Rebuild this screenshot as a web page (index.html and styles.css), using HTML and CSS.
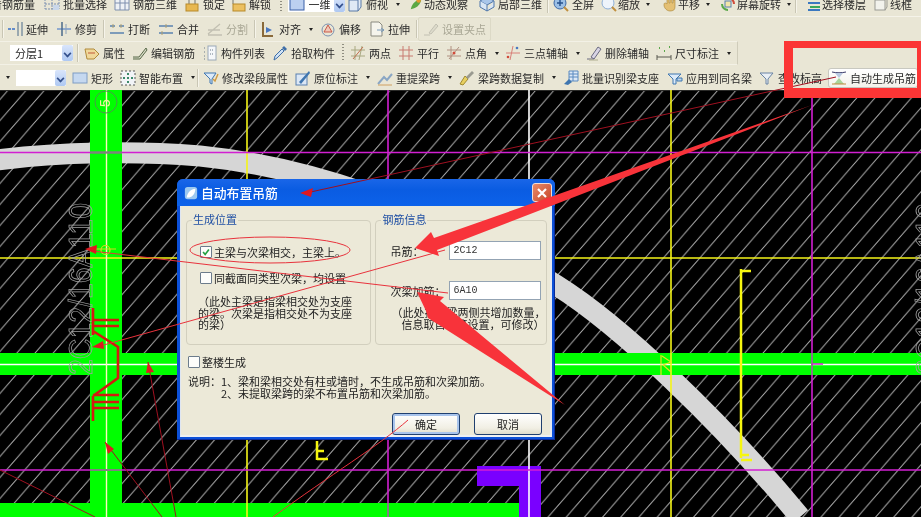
FILE: index.html
```html
<!DOCTYPE html>
<html lang="zh-CN">
<head>
<meta charset="utf-8">
<title>自动布置吊筋</title>
<link rel="stylesheet" href="styles.css">
</head>
<body>
<div class="page">
  <header class="toolbars">
    <div class="row row1">
      <span class="tool first"><span>看钢筋量</span></span>
      <span class="tool"><svg class="ic" viewBox="0 0 16 16"><path d="M1 3h14M1 8h14M1 13h14M1 3v10M8 3v10M15 3v10" stroke="#7a8fb0" stroke-dasharray="2 1" fill="none"/><rect x="9" y="9" width="6" height="5" fill="#c9d7ea"/></svg><span>批量选择</span></span>
      <span class="tool"><svg class="ic" viewBox="0 0 16 16"><path d="M1 2h14v12H1zM6 2v12M11 2v12M1 7h14" stroke="#7f8fae" fill="#eef1f5"/></svg><span>钢筋三维</span></span>
      <span class="tool"><svg class="ic" viewBox="0 0 16 16"><path d="M5 8V4a3 3 0 0 1 6 0v4" stroke="#9a9a90" stroke-width="1.5" fill="none"/><rect x="2" y="8" width="12" height="7" fill="#e8b850" stroke="#b88a2a"/></svg><span>锁定</span></span>
      <span class="tool lock2"><svg class="ic" viewBox="0 0 16 16"><path d="M3 8V4a3 3 0 0 1 6 0" stroke="#9a9a90" stroke-width="1.5" fill="none"/><rect x="3" y="8" width="12" height="7" fill="#ecc060" stroke="#b88a2a"/></svg><span>解锁</span></span>
      <i class="grip"></i>
      <span class="select sel-view"><svg class="ic" viewBox="0 0 16 16"><rect x="1" y="1" width="14" height="13" fill="#bcd0f0" stroke="#3a60a8"/></svg><span>一维</span><b class="drop"></b></span>
      <span class="tool tool-view"><svg class="ic" viewBox="0 0 16 16"><path d="M2 4l4-3h8v10l-3 4H2z" fill="#dfe9f5" stroke="#5a7aa8"/><path d="M2 4h9v11M11 4l3-3" stroke="#5a7aa8" fill="none"/></svg><span>俯视</span><i class="caret"></i></span>
      <span class="tool tight orbit"><svg class="ic small" viewBox="0 0 16 16"><path d="M2 14C3 8 8 3 14 2c0 5-4 10-9 11" fill="#5ca845"/><circle cx="11" cy="4" r="2.5" fill="#e59a30"/></svg><span>动态观察</span></span>
      <span class="tool"><svg class="ic" viewBox="0 0 16 16"><path d="M8 1l7 4-7 4-7-4z" fill="#a9c6ea" stroke="#4f76aa"/><path d="M1 5v6l7 4V9M15 5v6l-7 4" fill="#d9e6f5" stroke="#4f76aa"/></svg><span>局部三维</span></span>
      <i class="sep"></i>
      <span class="tool"><svg class="ic" viewBox="0 0 16 16"><circle cx="7" cy="7" r="6" fill="#9cc0e6" stroke="#3f6aa6"/><path d="M4 7h6M7 4v6" stroke="#26508c" stroke-width="1.4"/><path d="M11 11l4 4" stroke="#c09040" stroke-width="2"/></svg><span>全屏</span></span>
      <span class="tool tight"><svg class="ic" viewBox="0 0 16 16"><circle cx="7" cy="7" r="6" fill="#eef4fb" stroke="#8fb0d6"/><path d="M11 11l4 4" stroke="#c09040" stroke-width="2"/></svg><span>缩放</span><i class="caret"></i></span>
      <span class="tool tight pan"><svg class="ic" viewBox="0 0 16 16"><path d="M3 9c0-3 2-2 3-1V3h2v4h1V2h2v5h1V4h2v7c0 3-2 4-5 4s-6-3-6-6z" fill="#e4c074" stroke="#a88436" stroke-width=".6"/></svg><span>平移</span><i class="caret"></i></span>
      <span class="tool tight spin"><svg class="ic" viewBox="0 0 16 16"><path d="M8 2a6 6 0 0 1 6 6" stroke="#d04a3a" stroke-width="2" fill="none"/><path d="M8 14a6 6 0 0 1-6-6" stroke="#5aa84a" stroke-width="2" fill="none"/><rect x="5" y="5" width="6" height="6" fill="#f1e6a8" stroke="#5a80b0"/></svg><span>屏幕旋转</span><i class="caret"></i></span>
      <i class="sep"></i>
      <span class="tool tight floor"><svg class="ic" viewBox="0 0 16 16"><path d="M1 3h14" stroke="#3aa85a" stroke-width="2"/><path d="M3 7h12" stroke="#3a78c0" stroke-width="2"/><path d="M5 11h10" stroke="#3aa85a" stroke-width="2"/><path d="M3 14h12" stroke="#3a78c0" stroke-width="2"/></svg><span>选择楼层</span></span>
      <span class="tool tight"><svg class="ic" viewBox="0 0 16 16"><rect x="2" y="4" width="10" height="10" fill="#f2f2ec" stroke="#9a9a94"/><path d="M2 4l3-3h9v10l-2 3" fill="none" stroke="#9a9a94"/></svg><span>线框</span></span>
    </div>
    <div class="row row2">
      <i class="sep edge"></i>
      <span class="tool"><svg class="ic" viewBox="0 0 16 16"><path d="M1 8h7" stroke="#3a70c8" stroke-width="1.5" stroke-dasharray="3 1"/><path d="M11 1v14M15 1v14" stroke="#4a6a8a"/></svg><span>延伸</span></span>
      <span class="tool"><svg class="ic" viewBox="0 0 16 16"><path d="M1 8h14" stroke="#3a70c8"/><path d="M6 1v14" stroke="#4a6a8a" stroke-width="1.5"/><path d="M10 3v10" stroke="#8aa0b8"/></svg><span>修剪</span></span>
      <i class="sep"></i>
      <span class="tool"><svg class="ic" viewBox="0 0 16 16"><path d="M1 5h5M10 5h5M1 12h14" stroke="#5a82b0" stroke-width="1.4"/><path d="M4 3v4M12 3v4" stroke="#b0a070"/></svg><span>打断</span></span>
      <span class="tool"><svg class="ic" viewBox="0 0 16 16"><path d="M1 5h14M1 12h14" stroke="#5a82b0" stroke-width="1.4"/><path d="M8 3v4M4 10v4" stroke="#b0a070"/></svg><span>合并</span></span>
      <span class="tool off"><svg class="ic" viewBox="0 0 16 16"><path d="M1 13L13 3M1 9h12M1 14h14" stroke="#c2c0b2" stroke-width="1.3" fill="none"/></svg><span>分割</span></span>
      <i class="sep"></i>
      <span class="tool"><svg class="ic" viewBox="0 0 16 16"><path d="M3 1v14h10" stroke="#8a6a3a" stroke-width="2" fill="none"/><path d="M6 6l6 3-6 3z" fill="#4a78c0"/></svg><span>对齐</span><i class="caret"></i></span>
      <span class="tool"><svg class="ic" viewBox="0 0 16 16"><circle cx="8" cy="9" r="6" fill="none" stroke="#7a90b0"/><path d="M8 4l4 7H4z" fill="#f0c8b8" stroke="#c85a4a"/></svg><span>偏移</span></span>
      <span class="tool"><svg class="ic" viewBox="0 0 16 16"><path d="M2 1h8l3 3v11H2z" fill="#f5f4ec" stroke="#8a8a80"/><path d="M8 9h7M12 7l3 2-3 2" stroke="#7a9ab8" fill="none"/></svg><span>拉伸</span></span>
      <i class="sep"></i>
      <span class="tool off boxed"><svg class="ic" viewBox="0 0 16 16"><path d="M1 14h6M6 12l7-9 2 2-7 8z" stroke="#c2c0b2" fill="#dddbcb"/></svg><span>设置夹点</span></span>
    </div>
    <div class="row row3">
      <span class="select sel-floor"><span>分层1</span><b class="drop"></b></span>
      <i class="sep wide"></i>
      <span class="tool"><svg class="ic" viewBox="0 0 16 16"><path d="M1 4h9l5 5-5 5H3z" fill="#f0d89a" stroke="#b08a3a"/><path d="M4 8h7" stroke="#c05a3a"/></svg><span>属性</span></span>
      <span class="tool"><svg class="ic" viewBox="0 0 16 16"><path d="M1 12h6L14 3l1 2-7 9H1" fill="#d5d8c4" stroke="#5a6a4a"/></svg><span>编辑钢筋</span></span>
      <span class="tool"><svg class="ic" viewBox="0 0 16 16"><rect x="6" y="1" width="8" height="14" fill="#f5f7fa" stroke="#9aa8b8"/><path d="M2 3h2M2 7h2M2 11h2M2 14h2M8 5h4M8 9h4" stroke="#6a7a8a" stroke-dasharray="1 1"/></svg><span>构件列表</span></span>
      <span class="tool"><svg class="ic" viewBox="0 0 16 16"><path d="M2 15l1-4 7-7 2 2-7 7z" fill="#cfe2f5" stroke="#3f6ea8"/><path d="M10 3l2-2 3 3-2 2z" fill="#3f6ea8"/></svg><span>拾取构件</span></span>
      <i class="grip"></i>
      <span class="tool"><svg class="ic" viewBox="0 0 16 16"><path d="M1 5h14M1 11h14M5 1v14M12 1L9 15" stroke="#a8a880" fill="none"/><path d="M13 2L3 14" stroke="#c07050"/></svg><span>两点</span></span>
      <span class="tool"><svg class="ic" viewBox="0 0 16 16"><path d="M1 5h14M1 11h14M5 1v14M11 1v14" stroke="#c87a70" fill="none"/></svg><span>平行</span></span>
      <span class="tool"><svg class="ic" viewBox="0 0 16 16"><path d="M1 5h14M1 11h14M5 1v14M13 2L3 14" stroke="#b09080" fill="none"/><circle cx="8" cy="8" r="1.5" fill="#d04a3a"/></svg><span>点角</span><i class="caret"></i></span>
      <span class="tool"><svg class="ic" viewBox="0 0 16 16"><path d="M1 8h14M8 1L5 15" stroke="#d88078" fill="none"/><circle cx="3" cy="12" r="1.3" fill="#d04a3a"/><circle cx="12" cy="3" r="1.3" fill="#4a78c0"/></svg><span>三点辅轴</span><i class="caret"></i></span>
      <span class="tool"><svg class="ic" viewBox="0 0 16 16"><path d="M1 14h7M5 12l7-10 3 2-7 10z" fill="#d8d4e4" stroke="#6a6a80"/><path d="M3 15h9" stroke="#b0ae90"/></svg><span>删除辅轴</span></span>
      <span class="tool"><svg class="ic" viewBox="0 0 16 16"><path d="M1 12h14M1 10v5M15 10v5" stroke="#5a5a50" fill="none"/><path d="M3 3h1M8 6h1M13 2h1" stroke="#5aa84a" stroke-width="2"/></svg><span>尺寸标注</span><i class="caret"></i></span>
    </div>
    <div class="row row4">
      <i class="caret lead"></i>
      <span class="select sel-blank"><span></span><b class="drop"></b></span>
      <span class="tool"><svg class="ic" viewBox="0 0 16 16"><rect x="1" y="3" width="14" height="10" fill="#c5d8f0" stroke="#7f9cc4"/></svg><span>矩形</span></span>
      <span class="tool"><svg class="ic" viewBox="0 0 16 16"><rect x="1" y="1" width="14" height="14" fill="#f2f4f7" stroke="#555" stroke-dasharray="2 2"/><path d="M8 3v10M3 8h10" stroke="#3a8a6a" stroke-width="2" stroke-dasharray="2 2"/></svg><span>智能布置</span><i class="caret"></i></span>
      <i class="sep"></i>
      <span class="tool"><svg class="ic" viewBox="0 0 16 16"><path d="M1 3h12L9 9v5l-2-1V9z" fill="#dceaf8" stroke="#3f76b0"/><path d="M10 9l2 2 3-7" stroke="#d09a40" stroke-width="1.4" fill="none"/></svg><span>修改梁段属性</span></span>
      <span class="tool"><svg class="ic" viewBox="0 0 16 16"><rect x="1" y="4" width="11" height="11" fill="#dbe7f5" stroke="#5a80b0"/><path d="M4 12L14 1l1 2L6 14z" fill="#3f76b0"/></svg><span>原位标注</span><i class="caret"></i></span>
      <span class="tool"><svg class="ic" viewBox="0 0 16 16"><path d="M1 14L7 7l3 3 5-6" stroke="#8aa6c4" stroke-width="2" fill="none"/><path d="M1 15h14" stroke="#d0a060"/></svg><span>重提梁跨</span><i class="caret"></i></span>
      <span class="tool"><svg class="ic" viewBox="0 0 16 16"><path d="M1 14l5-8 3 3-5 6z" fill="#e8d060" stroke="#a08a30"/><path d="M7 7l6-6 2 2-6 6z" fill="#9a9a90"/></svg><span>梁跨数据复制</span><i class="caret"></i></span>
      <span class="tool wider"><svg class="ic" viewBox="0 0 16 16"><path d="M6 1h9v10H6zM6 4h9M6 7h9M10 1v10" fill="#dce8f5" stroke="#5a8ac0"/><path d="M1 14l5-5 3 3-4 3z" fill="#3f76b0"/></svg><span>批量识别梁支座</span></span>
      <span class="tool"><svg class="ic" viewBox="0 0 16 16"><path d="M1 4h13l-5 5v5H6V9z" fill="#dceaf8" stroke="#3f76b0"/><path d="M10 8h5v3h-5z" fill="#bcd5ee" stroke="#3f76b0"/></svg><span>应用到同名梁</span></span>
      <span class="tool"><svg class="ic" viewBox="0 0 16 16"><path d="M1 3h13L9 9v5H7V9z" fill="#e8eef4" stroke="#6a84a4"/></svg><span>查改标高</span></span>
      <span class="tool active"><svg class="ic" viewBox="0 0 16 16"><path d="M1 2c4 1 10 1 14 0" stroke="#3a3a6a" fill="none"/><path d="M4 3l8 0-4 5z" fill="#b8c8e0"/><path d="M8 8l5 6H3z" fill="#a8d49a"/><path d="M1 14h14" stroke="#c08a40"/></svg><span>自动生成吊筋</span></span>
    </div>
  </header>

  <svg class="canvas" viewBox="0 90 921 427" aria-hidden="true">
    <defs>
      <pattern id="hatch" patternUnits="userSpaceOnUse" width="18.2" height="21" x="8.2" y="90">
        <path d="M-2 23.3L20.2 -2.3M17 22.4L19 20M-1 1.2L1 -1.2" stroke="#ababab" stroke-width="1" fill="none"/>
      </pattern>
    </defs>
    <rect x="0" y="90" width="921" height="427" fill="#000"/>
    <rect x="0" y="90" width="921" height="427" fill="url(#hatch)"/>
    <rect x="0" y="89" width="921" height="2" fill="#2a2a28"/>
    <path class="arc" d="M-10 161C60 151 140 151 200 156C300 166 430 205 556 285C620 325 720 420 800 517"/>
    <rect class="green" x="90" y="90" width="32" height="427"/>
    <rect class="green" x="0" y="353" width="921" height="22"/>
    <rect class="green" x="0" y="503" width="519" height="14"/>
    <path d="M477 466H541V517H519V486H477z" fill="#7a00ff"/>
    <path class="white" d="M0 364.5H921M529 90V517"/>
    <path class="yellow" d="M0 258H921M247 90V517M671 90V517"/>
    <path d="M106.5 90V517" stroke="#fff6c0" stroke-width="1.4"/>
    <path class="magenta" d="M0 152.5H921M0 470H921M388 90V517M812 90V517"/>
    <path class="greyline" d="M90 152.5H122M90 470H122M388 353V375M388 503V517M812 353V375"/>
    <path d="M812 364H823" stroke="#d020d0" stroke-width="1.5"/>
    <text class="outline" transform="translate(92,375) rotate(-90)" textLength="172" lengthAdjust="spacingAndGlyphs">2C12/16A110</text>
    <text class="outline" transform="translate(939,375) rotate(-90)" textLength="172" lengthAdjust="spacingAndGlyphs">2C12/16A110</text>
    <circle cx="106" cy="102" r="11" fill="none" stroke="#4a9a4a"/>
    <text class="axis" transform="translate(110,107) rotate(-90)">5</text>
    <path d="M93 308V335M93 396V421M93 320H119M93 326H119M93 331L118 347V378L93 396M93 395H119M93 402H119M93 408H119" fill="none" stroke="#d41a10" stroke-width="2.6"/>
    <path d="M741 269V458M741 271H751M741 460H752M741 455H749" class="bracket"/>
    <path d="M317 441V460M317 459H328M317 451H324" class="bracket"/>
    <path d="M661 355V375M662 356L671 362L663 365L671 372" fill="none" stroke="#e8e020" stroke-width="1.2"/>
    <path d="M95 249H116M101 250a4 4 0 1 0 9 0a4 4 0 1 0-9 0" fill="none" stroke="#d8d820" stroke-width="1.2"/>
  </svg>

  <section class="dialog">
    <div class="titlebar">
      <svg class="titleicon" viewBox="0 0 16 16"><rect x="1" y="1" width="14" height="14" rx="3" fill="#9cc8f0"/><path d="M3 13C4 7 8 3 13 3c0 5-3 9-7 10z" fill="#fff"/></svg>
      <span class="title">自动布置吊筋</span>
      <span class="close"><svg viewBox="0 0 12 12"><path d="M2 2l8 8M10 2l-8 8" stroke="#fff" stroke-width="2.2"/></svg></span>
    </div>
    <div class="client">
      <div class="groups">
        <div class="group group-pos">
          <span class="legend">生成位置</span>
          <label class="check first-check"><i class="box checked"><svg viewBox="0 0 12 12"><path d="M2.5 6l2.5 3 4.5-6" stroke="#22a040" stroke-width="2" fill="none"/></svg></i><span>主梁与次梁相交，主梁上。</span></label>
          <label class="check second-check"><i class="box"></i><span>同截面同类型次梁，均设置</span></label>
          <p class="note note-left">（此处主梁是指梁相交处为支座<br>的梁。次梁是指相交处不为支座<br>的梁）</p>
        </div>
        <div class="group group-info">
          <span class="legend">钢筋信息</span>
          <div class="field"><span class="flabel">吊筋：</span><span class="input">2C12</span></div>
          <div class="field field2"><span class="flabel">次梁加筋：</span><span class="input">6A10</span></div>
          <p class="note note-right">（此处指次梁两侧共增加数量，<br><span class="indent">信息取自计算设置，可修改）</span></p>
        </div>
      </div>
      <label class="check whole"><i class="box"></i><span>整楼生成</span></label>
      <div class="remarks">
        <div class="remark"><span class="rlabel">说明：</span><span>1、梁和梁相交处有柱或墙时，不生成吊筋和次梁加筋。</span></div>
        <div class="remark"><span class="rlabel"></span><span>2、未提取梁跨的梁不布置吊筋和次梁加筋。</span></div>
      </div>
      <div class="actions">
        <span class="btn default"><span>确定</span></span>
        <span class="btn"><span>取消</span></span>
      </div>
    </div>
  </section>

  <svg class="marks" viewBox="0 0 921 517" aria-hidden="true">
    <path class="thin dark" d="M836 77L306 193"/>
    <path class="solid" d="M300 193L313 188L311 197z"/>
    <path class="thin" d="M445 250L100 346M448 293L92 251M408 420C380 445 330 475 273 517"/>
    <path class="solid" d="M85 249L97 245L96 254z"/>
    <path class="solid" d="M92 347L103 341L104 349z"/>
    <ellipse class="thin" cx="270" cy="250" rx="80" ry="13"/>
    <path class="thin dark" d="M105 442L162 517M148 362L176 517M0 470L95 517"/>
    <path class="solid" d="M105 442L114 449L108 454z"/>
    <path class="solid" d="M148 362L154 372L146 373z"/>
    <path class="big" d="M812 105L434 238L431 232L415 248L439 256L437 250z"/>
    <path class="big" d="M417 292L444 297L440 301L565 405L428 318L426 311z"/>
    <path class="frame" fill-rule="evenodd" d="M784 41H925V98H784zM793 48V88H917V48z"/>
  </svg>
</div>
</body>
</html>
```

FILE: styles.css
```css
* { box-sizing: border-box; }
html, body { margin: 0; padding: 0; background: #000; }
body { width: 921px; height: 517px; overflow: hidden; }
.page {
  position: relative;
  width: 921px;
  height: 517px;
  overflow: hidden;
  font: 11px/14px "Noto Sans CJK SC", "Liberation Sans", sans-serif;
  color: #2a2a2a;
  filter: blur(0.3px);
}

/* toolbars */
.toolbars { display: flex; flex-direction: column; height: 90px; background: #e9e6d5; }
.row { display: flex; align-items: center; height: 24px; flex: none; white-space: nowrap; }
.row1 { margin-top: -8px; height: 25px; border-bottom: 1px solid #f5f3e9; }
.row2 { height: 24px; }
.row3 { height: 24px; width: 738px; border: 1px solid #f3f1e6; border-left: 0; border-right-color: #cfccba; }
.row4 { height: 25px; padding-left: 6px; }
.tool { display: flex; align-items: center; gap: 3px; margin-right: 8px; flex: none; }
.row1 .tool, .row3 .tool, .row4 .tool { margin-right: 7px; }
.row4 .caret { margin-right: 0; }
.row4 .sep { margin-left: -5px; }
.row4 .wider { margin-right: 8px; }
.row1 .first { margin-left: -9px; margin-right: 9px; }
.row1 .lock2 { margin-left: -2px; margin-right: 9px; }
.row1 .tight { gap: 1px; }
.row1 .tool-view { margin-left: 1px; margin-right: 10px; }
.row1 .orbit { margin-right: 11px; }
.row1 .pan { margin-left: 5px; }
.row1 .spin { margin-left: 4px; }
.row1 .floor { margin-left: 4px; }
.ic { width: 16px; height: 16px; flex: none; display: block; }
.ic.small { width: 14px; height: 14px; }
.off { color: #a9a795; }
.boxed { height: 24px; padding: 0 4px; margin-left: -4px; border: 1px solid #dcd9c6; border-radius: 2px; }
.caret { display: block; width: 0; height: 0; margin-left: 5px; margin-right: -1px; border: 2.5px solid transparent; border-top: 3px solid #222; border-bottom: 0; }
.row4 .caret.lead { margin: 0 6px 0 0; }
.sep { display: block; width: 2px; height: 18px; flex: none; margin: 0 4px 0 -2px; border-left: 1px solid #c9c6b4; border-right: 1px solid #f6f4ea; }
.sep.edge { margin: 0 3px 0 2px; }
.sep.wide { margin: 0 5px 0 4px; }
.grip { display: block; width: 2px; height: 18px; flex: none; margin: 0 6px 0 0; background: repeating-linear-gradient(#8f8d80 0 1px, transparent 1px 3px); }
.select { display: flex; align-items: center; justify-content: space-between; height: 16px; background: #fff; flex: none; padding-left: 5px; }
.drop { display: block; position: relative; width: 11px; height: 100%; background: linear-gradient(#d9e5fb, #aec8f2); border-radius: 2px; }
.drop::after { content: ""; position: absolute; left: 2px; top: 5px; width: 5px; height: 5px; border: solid #34508c; border-width: 0 2px 2px 0; transform: rotate(45deg) scale(.8); }
.sel-view { width: 57px; margin-right: 1px; padding-left: 1px; }
.sel-floor { width: 63px; margin-left: 10px; }
.sel-blank { width: 50px; margin-right: 6px; }
.row4 .active { height: 20px; width: 90px; margin: 0 0 0 -1px; padding-left: 2px; background: linear-gradient(#fff, #f3f2ea); border: 1px solid #c8c8c0; border-radius: 3px; }

/* drawing */
.canvas { display: block; width: 921px; height: 427px; }
.arc { fill: none; stroke: #d6d6d6; stroke-width: 21; }
.green { fill: #00ff00; }
.white { fill: none; stroke: #fff; stroke-width: 1.6; }
.yellow { fill: none; stroke: #f4f418; stroke-width: 1.6; }
.magenta { fill: none; stroke: #d21fd2; stroke-width: 1.6; }
.greyline { fill: none; stroke: #808080; stroke-width: 1.8; }
.outline { font: 34px "Liberation Sans", sans-serif; fill: none; stroke: #a0a0a0; stroke-width: .8; }
.axis { font: 14px "Liberation Sans", sans-serif; fill: #f4f4a0; }
.bracket { fill: none; stroke: #f6f610; stroke-width: 2.5; }

/* dialog */
.dialog { position: absolute; left: 177px; top: 179px; width: 378px; height: 261px; display: flex; flex-direction: column; background: #0c50d8; border-radius: 6px 6px 0 0; box-shadow: inset 0 -1px 0 #0a2a9a, inset -1px 0 0 #0a2a9a; }
.titlebar { display: flex; align-items: center; height: 27px; padding: 0 3px 0 7px; flex: none; background: linear-gradient(#1a66e8, #0a5ce2 40%, #0c62ea); border-radius: 6px 6px 0 0; }
.titleicon { width: 14px; height: 14px; flex: none; margin-right: 3px; }
.title { flex: 1; color: #fff; font-size: 12.8px; line-height: 16px; font-weight: 500; }
.close { display: flex; align-items: center; justify-content: center; width: 20px; height: 19px; background: linear-gradient(135deg, #e88a68, #c8482a); border: 1px solid #f2ddd4; border-radius: 3px; }
.close svg { width: 12px; height: 12px; }
.client { flex: 1; margin: 0 3px 3px 3px; padding: 14px 3px 0 5px; background: #ece9d8; border-left: 1px solid #dfe6f2; border-right: 2px solid #e6e9f0; border-bottom: 2px solid #eef0f2; display: flex; flex-direction: column; color: #222; }
.groups { display: flex; gap: 4px; height: 125px; flex: none; }
.group { position: relative; border: 1px solid #d2cfbe; border-radius: 4px; }
.group-pos { width: 187px; padding: 24px 0 0 11px; }
.group-info { width: 173px; padding: 20px 0 0 14px; }
.legend { position: absolute; left: 5px; top: -9px; padding: 0 1px; background: #ece9d8; color: #2050a4; line-height: 14px; }
.check { display: flex; align-items: center; gap: 2px; height: 14px; }
.first-check, .second-check { margin-left: 2px; }
.second-check { margin-top: 12px; }
.box { display: block; width: 12px; height: 12px; flex: none; background: #fdfdfb; border: 1px solid #6c7c8c; border-radius: 1px; }
.box svg { display: block; width: 10px; height: 10px; }
.note { margin: 0; line-height: 11.6px; }
.note-left { margin-top: 11px; }
.note-right { margin-top: 7px; margin-left: 1px; white-space: nowrap; }
.indent { padding-left: 10px; }
.field { display: flex; align-items: center; height: 19px; }
.field2 { margin-top: 21px; }
.flabel { width: 59px; flex: none; white-space: nowrap; }
.input { width: 92px; height: 100%; padding-left: 3px; background: #fff; border: 1px solid #93a3b3; font: 10px/17px "Liberation Mono", monospace; color: #333; }
.whole { margin: 10px 0 0 2px; }
.remarks { margin: 6px 0 0 2px; }
.remark { display: flex; height: 12px; line-height: 12px; white-space: nowrap; }
.rlabel { width: 33px; flex: none; }
.actions { display: flex; justify-content: flex-end; gap: 14px; margin: 14px 5px 0 0; }
.btn { display: flex; align-items: center; justify-content: center; width: 68px; height: 22px; background: linear-gradient(#fff, #f1efe4 70%, #dfdccb); border: 1px solid #1f3f6f; border-radius: 3px; }
.default { box-shadow: inset 0 0 0 2px #a8c4ec; }

/* annotations */
.marks { position: absolute; left: 0; top: 0; width: 921px; height: 517px; pointer-events: none; }
.thin { fill: none; stroke: #e8323c; stroke-width: 1; }
.dark { stroke: #a01020; }
.solid { fill: #e01820; }
.big { fill: #f8333a; }
.frame { fill: #fb3535; }
```
